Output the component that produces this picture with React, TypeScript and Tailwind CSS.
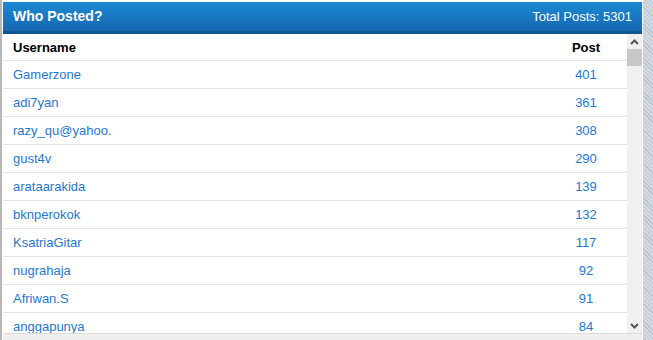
import React from "react";

const rows: [string, number][] = [
  ["Gamerzone", 401],
  ["adi7yan", 361],
  ["razy_qu@yahoo.", 308],
  ["gust4v", 290],
  ["arataarakida", 139],
  ["bknperokok", 132],
  ["KsatriaGitar", 117],
  ["nugrahaja", 92],
  ["Afriwan.S", 91],
  ["anggapunya", 84],
];

export default function App() {
  return (
    <div
      className="w-[653px] h-[340px] overflow-hidden flex bg-[#c9d2da]"
      style={{
        backgroundImage:
          "repeating-linear-gradient(45deg, #b9c4ce 0px, #b9c4ce 1px, #d3dbe2 1px, #d3dbe2 3px)",
        fontFamily: '"Liberation Sans", Arial, sans-serif',
      }}
    >
      <div className="w-[643px] h-[340px] flex flex-col bg-white border-l-2 border-[#b8b8b8] pl-px pr-px pt-[2px]">
        <div className="h-[29px] flex items-center justify-between px-[10px] bg-gradient-to-b from-[#1c8ad4] to-[#1667b0] text-white">
          <span className="font-bold text-[14px]">Who Posted?</span>
          <span className="text-[13px]">Total Posts: 5301</span>
        </div>
        <div className="h-[3px] bg-[#0f5590]" />
        <div className="flex flex-1 min-h-0">
          <div className="flex-1 flex flex-col overflow-hidden">
            <div className="h-[27px] shrink-0 flex items-center pt-px border-b border-[#e4e4e4] text-[13px] font-bold text-black">
              <span className="pl-[10px] flex-1">Username</span>
              <span className="w-[70px] text-center pr-[12px]">Post</span>
            </div>
            {rows.map(([name, n]) => (
              <div
                key={name}
                className="h-[28px] shrink-0 flex items-center pt-px border-b border-[#e4e4e4] text-[13px] text-[#1f78cf]"
              >
                <span className="pl-[10px] flex-1">{name}</span>
                <span className="w-[70px] text-center pr-[12px]">{n}</span>
              </div>
            ))}
          </div>
          <div className="w-[15px] bg-[#f0f0f0] flex flex-col items-center">
            <div className="h-[15px] w-full flex items-center justify-center">
              <svg width="9" height="6" viewBox="0 0 9 6">
                <path d="M1 5 L4.5 1.5 L8 5" stroke="#555" strokeWidth="2" fill="none" />
              </svg>
            </div>
            <div className="h-[17px] w-full bg-[#c8c8c8]" />
            <div className="flex-1" />
            <div className="h-[15px] w-full flex items-center justify-center">
              <svg width="9" height="6" viewBox="0 0 9 6">
                <path d="M1 1 L4.5 4.5 L8 1" stroke="#555" strokeWidth="2" fill="none" />
              </svg>
            </div>
          </div>
        </div>
        <div className="h-[7px] bg-[#efefef] border-t border-[#dcdcdc]" />
      </div>
    </div>
  );
}
